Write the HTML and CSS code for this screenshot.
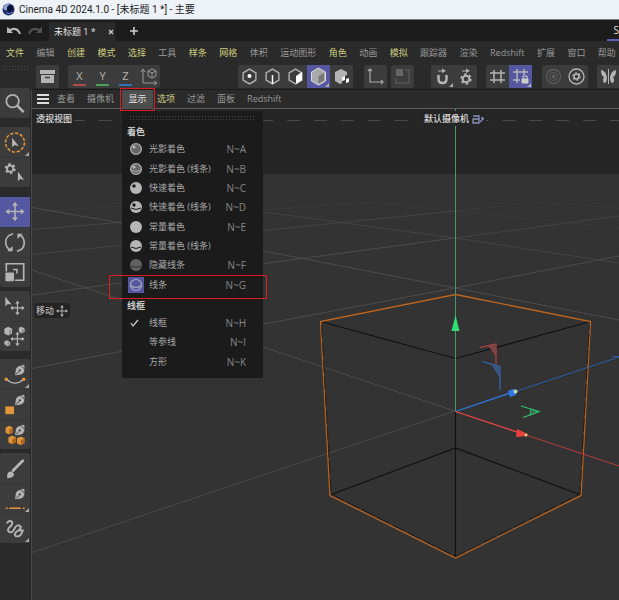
FILE: index.html
```html
<!DOCTYPE html>
<html lang="zh-CN">
<head>
    <meta charset="utf-8">
    <title>Cinema 4D 2024.1.0 - [未标题 1 *] - 主要</title>
    <link rel="stylesheet" href="styles.css">
</head>
<body>
    <!-- shared icons -->
    <svg class="defs" aria-hidden="true">
        <symbol id="move" viewBox="0 0 20 20">
            <path d="M10 2v16M2 10h16" stroke="currentColor" stroke-width="1.6"/>
            <path d="M10 0l3 4H7zM10 20l3-4H7zM0 10l4-3v6zM20 10l-4-3v6z" fill="currentColor"/>
        </symbol>
        <symbol id="pen" viewBox="0 0 10 11">
            <path d="M0 11L1 4Q3 1 6 1L10 5Q9 9 6 10Z" fill="currentColor"/>
            <path d="M6 0h3l1 1v3z" fill="currentColor"/>
            <path d="M1 10l4-4" stroke="#3c3c3c"/>
            <circle cx="5" cy="5.600" r="1.100" fill="#3c3c3c"/>
        </symbol>
        <symbol id="gear" viewBox="-6 -6 12 12">
            <circle r="3.300" fill="none" stroke="currentColor" stroke-width="2"/>
            <circle r="4.800" fill="none" stroke="currentColor" stroke-width="1.800" stroke-dasharray="2.500 2.520"/>
        </symbol>
        <symbol id="hex" viewBox="0 0 16 16">
            <path d="M8 1l6 3.500v7L8 15l-6-3.500v-7z" fill="none" stroke="currentColor" stroke-width="1.300"/>
        </symbol>
        <symbol id="cube" viewBox="0 0 8 9">
            <path d="M4 0l4 2v5L4 9 0 7V2z" fill="#e0953c"/>
            <path d="M4 4l4-2v5L4 9z" fill="#a8681f"/>
        </symbol>
    </svg>

    <header class="title-bar">
        <svg class="logo" width="13" height="13" viewBox="0 0 13 13">
            <circle cx="6.500" cy="6.500" r="6" fill="#1c2a66"/>
            <path d="M1 5Q3 0 8 1 5 3 5 7 2 8 1 5z" fill="#8fa4d8"/>
            <circle cx="8" cy="5.500" r="3" fill="#0b1030"/>
            <path d="M4 10q4 2 7-1" stroke="#6d86c8" fill="none"/>
        </svg>
        <span>Cinema 4D 2024.1.0 - [未标题 1 *] - 主要</span>
    </header>

    <div class="tab-bar">
        <button class="history" aria-label="撤销"><svg width="14" height="9" viewBox="0 0 14 9"><path d="M0 1v6h6L4 5q5-3 8 3h2Q11-1 3 3z" fill="#b8b8b8"/></svg></button>
        <button class="history" aria-label="重做"><svg width="14" height="9" viewBox="0 0 14 9"><path d="M14 1v6H8l2-2Q5 2 2 8H0q3-9 11-5z" fill="#505050"/></svg></button>
        <div class="tab">
            <span>未标题 1 *</span>
            <button aria-label="关闭"><svg width="6" height="6" viewBox="0 0 6 6"><path d="M1 1l4 4M5 1L1 5" stroke="#ccc" stroke-width="1.300"/></svg></button>
        </div>
        <button class="add" aria-label="新建"><svg width="8" height="8" viewBox="0 0 8 8"><path d="M4 0v8M0 4h8" stroke="#ccc" stroke-width="1.600"/></svg></button>
        <button class="layout">S</button>
    </div>

    <nav class="menu-bar">
        <button class="hot">文件</button>
        <button>编辑</button>
        <button class="hot">创建</button>
        <button class="hot">模式</button>
        <button class="hot">选择</button>
        <button>工具</button>
        <button class="hot">样条</button>
        <button class="hot">网格</button>
        <button>体积</button>
        <button>运动图形</button>
        <button class="hot">角色</button>
        <button>动画</button>
        <button class="hot">模拟</button>
        <button>跟踪器</button>
        <button>渲染</button>
        <button>Redshift</button>
        <button>扩展</button>
        <button>窗口</button>
        <button>帮助</button>
    </nav>

    <div class="workspace">
        <aside class="side-bar">
            <div class="grip"></div>
            <div class="tools">
                <button aria-label="搜索"><svg viewBox="0 0 30 30"><circle cx="12.500" cy="12.500" r="6.500" fill="none" stroke="currentColor" stroke-width="1.800"/><path d="M17 17l7 7" stroke="currentColor" stroke-width="2.500"/></svg></button>
            </div>
            <div class="tools select-tools">
                <button class="more" aria-label="选择"><svg viewBox="0 0 30 30"><circle cx="15" cy="15" r="9.800" fill="none" stroke="#e0953c" stroke-width="1.600" stroke-dasharray="3.400 1.700"/><path d="M12 10v10l2.500-2.500 4.500 1.500z" fill="currentColor"/></svg></button>
                <button aria-label="选择设置"><svg viewBox="0 0 30 30"><use href="#gear" x="4" y="5" width="12" height="12"/><path d="M18 14v10l2.500-2.500 4 1.500z" fill="currentColor"/></svg></button>
            </div>
            <div class="tools transform-tools">
                <button class="active" aria-label="移动"><svg viewBox="0 0 30 30"><use href="#move" x="5" y="4" width="20" height="20"/></svg></button>
                <button aria-label="旋转"><svg viewBox="0 0 30 30"><path d="M13 6Q5 8 5.500 15q0 5 4.500 8M17 24q8-2 7.500-9 0-5-4.500-8" fill="none" stroke="currentColor" stroke-width="1.700"/><path d="M7 24h5.500v-5.500zM23 6h-5.500v5.500z" fill="currentColor"/></svg></button>
                <button aria-label="缩放"><svg viewBox="0 0 30 30"><path d="M6 14V6h18v17H15" fill="none" stroke="currentColor" stroke-width="1.700"/><rect x="5" y="15" width="9" height="9" rx="1" fill="currentColor"/><path d="M13 12h4v4" fill="none" stroke="currentColor" stroke-width="1.600"/></svg></button>
            </div>
            <div class="tools place-tools">
                <button aria-label="放置"><svg viewBox="0 0 30 30"><path d="M5 5v10l2.500-2.500 4 .5z" fill="currentColor"/><use href="#move" x="10" y="9" width="15" height="15"/></svg></button>
                <button aria-label="散布"><svg viewBox="0 0 30 30"><path d="M4 7l4-2 4 2v5l-4 2-4-2z" fill="currentColor"/><path d="M19 6l3-1 3 2v3l-3 2-3-2z" fill="currentColor"/><path d="M4 20l3-1 3 2v3l-3 1-3-2z" fill="currentColor"/><path d="M10 8v5M23 8v3M8 21v3" stroke="#666"/><use href="#move" x="10" y="10" width="15" height="15"/></svg></button>
            </div>
            <div class="tools draw-tools">
                <button class="more" aria-label="样条画笔"><svg viewBox="0 0 30 30"><use href="#pen" x="15" y="5" width="10" height="11"/><path d="M6 20q9 8 18 0" fill="none" stroke="currentColor" stroke-width="1.300"/><circle cx="6" cy="20" r="1.800" fill="#e0953c"/><circle cx="24" cy="20" r="1.800" fill="#e0953c"/></svg></button>
                <button aria-label="多边形画笔"><svg viewBox="0 0 30 30"><use href="#pen" x="15" y="5" width="10" height="11"/><rect x="5" y="17" width="9" height="8" fill="#e0953c"/></svg></button>
                <button aria-label="体积画笔"><svg viewBox="0 0 30 30"><use href="#cube" x="5" y="6" width="8" height="9"/><use href="#cube" x="8" y="16" width="8" height="9"/><use href="#cube" x="17" y="17" width="8" height="9"/><use href="#pen" x="15" y="5" width="10" height="11"/></svg></button>
            </div>
            <div class="tools paint-tools">
                <button aria-label="笔刷"><svg viewBox="0 0 30 30"><path d="M13 17L23 7" stroke="currentColor" stroke-width="3" stroke-linecap="round"/><path d="M7 25q-1-6 3-7 4 0 4 4-2 3-7 3z" fill="currentColor"/></svg></button>
                <button class="more" aria-label="线条画笔"><svg viewBox="0 0 30 30"><use href="#pen" x="15" y="5" width="10" height="11"/><path d="M9 25h12M5.500 25h2M23 25h2" stroke="#e0953c" stroke-width="1.500"/></svg></button>
                <button class="more" aria-label="草绘"><svg viewBox="0 0 30 30"><path d="M7 9q2-3 5-1 1 3-3 6-3 4 1 5 3 0 5-5 3-4 6-1 0 3-4 5-4 3-1 5 5 1 7-6h-3" fill="none" stroke="currentColor" stroke-width="2" stroke-linecap="round"/></svg></button>
            </div>
        </aside>

        <main class="main">
            <div class="tool-bar">
                <div class="grip grip-tall"></div>
                <div class="group">
                    <button aria-label="资产"><svg viewBox="0 0 23 23"><path d="M4 5h15v4H4zM5 10h13v8H5z" fill="currentColor"/><path d="M9 12.500h5" stroke="#3c3c3c" stroke-width="1.500"/></svg></button>
                </div>
                <div class="group">
                    <button class="axis axis-x">X</button>
                    <button class="axis axis-y">Y</button>
                    <button class="axis axis-z">Z</button>
                    <button aria-label="坐标系统"><svg viewBox="0 0 23 23"><path d="M6 5v13h13M4 7l2-3 2 3M17 16l3 2-3 2" fill="none" stroke="#999"/><path d="M15 4l4 2v5l-4 2-4-2V6zM11 6l4 2 4-2M15 8v5" fill="none" stroke="#999"/></svg></button>
                </div>
                <div class="group modes">
                    <button aria-label="点"><svg viewBox="0 0 23 23"><use href="#hex" x="3" y="3" width="17" height="17"/><circle cx="11.500" cy="11" r="2" fill="#fff"/></svg></button>
                    <button aria-label="边"><svg viewBox="0 0 23 23"><use href="#hex" x="3" y="3" width="17" height="17"/><path d="M11.500 10v9" stroke="#fff" stroke-width="1.500"/></svg></button>
                    <button aria-label="多边形"><svg viewBox="0 0 23 23"><use href="#hex" x="3" y="3" width="17" height="17"/><path d="M12 11l6-4v8l-6 4z" fill="#fff"/></svg></button>
                    <button class="active more" aria-label="模型"><svg viewBox="0 0 23 23"><path d="M11.500 3l7 4v9l-7 4-7-4V7z" fill="#aaa" stroke="#ddd"/><path d="M11.500 11L17 8v7.500l-5.500 3z" fill="#777"/></svg></button>
                    <button aria-label="纹理"><svg viewBox="0 0 23 23"><path d="M5 7l6-3 6 3v3l-5 2v6l-2 1-5-3z" fill="currentColor"/><path d="M12 12l3-1v4l-3 1zM16 14l3-1v4l-3 1z" fill="#fff"/></svg></button>
                </div>
                <div class="group coords">
                    <button aria-label="启用轴心"><svg viewBox="0 0 23 23"><path d="M6 4v13h13M4 6l2-2 2 2M17 15l2 2-2 2" fill="none" stroke="#aaa" stroke-width="1.200"/></svg></button>
                </div>
                <div class="group plane">
                    <button aria-label="工作平面" disabled><svg viewBox="0 0 23 23"><path d="M5 4h7v7H5z" fill="#666"/><path d="M14 5h4v13H5v-5" fill="none" stroke="#555" stroke-width="1.500"/></svg></button>
                </div>
                <div class="group snap">
                    <button class="more" aria-label="捕捉"><svg viewBox="0 0 23 23"><path d="M7.500 10v4q0 4 4 4t4-4v-4" fill="none" stroke="currentColor" stroke-width="2.500"/><path d="M7 5.500h4v-2l4 2.500-4 2V6.500H7z" fill="currentColor"/></svg></button>
                    <button aria-label="捕捉设置"><svg viewBox="0 0 23 23"><use href="#gear" x="6" y="8" width="12" height="12"/><path d="M8 5.500h4v-2l4 2.500-4 2V6.500H8z" fill="currentColor"/></svg></button>
                </div>
                <div class="group">
                    <button aria-label="网格"><svg viewBox="0 0 23 23"><path d="M8 5v13M15 5v13M4 8h15M4 15h15" stroke="currentColor" stroke-width="1.500"/></svg></button>
                    <button class="active more" aria-label="锁定网格"><svg viewBox="0 0 23 23"><path d="M8 4v14M15 4v6M4 7h15M4 15h7" stroke="currentColor" stroke-width="1.500"/><path d="M13 14h6v4h-6z" fill="#ccc" stroke="#ccc"/><path d="M14 14v-3h4v3" fill="none" stroke="#ccc"/></svg></button>
                </div>
                <div class="group solo">
                    <button aria-label="独显"><svg viewBox="0 0 23 23"><circle cx="11.500" cy="11.500" r="7" fill="none" stroke="#5c5c5c" stroke-width="1.300"/><circle cx="11.500" cy="11.500" r="4" fill="none" stroke="#5c5c5c"/><circle cx="11.500" cy="11.500" r="2" fill="#5c5c5c"/></svg></button>
                    <button aria-label="独显设置"><svg viewBox="0 0 23 23"><circle cx="11.500" cy="11.500" r="7.500" fill="none" stroke="currentColor" stroke-width="1.300"/><use href="#gear" x="7" y="7" width="9" height="9"/></svg></button>
                </div>
                <div class="group">
                    <button aria-label="对称"><svg viewBox="0 0 23 23"><path d="M11.500 4v15" stroke="currentColor"/><path d="M10 12Q9 6 4 5q0 6 3 7-2 3 0 6 3 0 3-6zM13 12q1-6 6-7 0 6-3 7 2 3 0 6-3 0-3-6z" fill="currentColor"/></svg></button>
                </div>
            </div>

            <section class="view">
                <nav class="view-menu">
                    <button class="burger" aria-label="菜单"><span></span></button>
                    <button>查看</button>
                    <button>摄像机</button>
                    <div class="dropdown">
                        <button class="open" aria-expanded="true">显示</button>
                        <div class="panel">
                            <div class="grip"></div>
                            <h2>着色</h2>
                            <ul class="shading">
                                <li><button><svg viewBox="0 0 16 16"><circle cx="8" cy="8" r="5.400" fill="#666" stroke="#aaa" stroke-width="1.300"/><circle cx="6" cy="6" r="1.500" fill="#bbb"/></svg><span>光影着色</span><kbd>N~A</kbd></button></li>
                                <li><button><svg viewBox="0 0 16 16"><circle cx="8" cy="8" r="5.400" fill="#666" stroke="#aaa" stroke-width="1.300"/><circle cx="6" cy="6" r="1.500" fill="#bbb"/><path d="M3 9q5 3 10 0" fill="none" stroke="#aaa"/></svg><span>光影着色 (线条)</span><kbd>N~B</kbd></button></li>
                                <li><button><svg viewBox="0 0 16 16"><circle cx="8" cy="8" r="6" fill="#b5b5b5"/><circle cx="6" cy="6" r="1.700" fill="#1b1b1b"/></svg><span>快速着色</span><kbd>N~C</kbd></button></li>
                                <li><button><svg viewBox="0 0 16 16"><circle cx="8" cy="8" r="6" fill="#b5b5b5"/><circle cx="6" cy="6" r="1.700" fill="#1b1b1b"/><path d="M3 9q5 3 10 0" fill="none" stroke="#1b1b1b"/></svg><span>快速着色 (线条)</span><kbd>N~D</kbd></button></li>
                                <li><button><svg viewBox="0 0 16 16"><circle cx="8" cy="8" r="6" fill="#b5b5b5"/></svg><span>常量着色</span><kbd>N~E</kbd></button></li>
                                <li><button><svg viewBox="0 0 16 16"><circle cx="8" cy="8" r="6" fill="#b5b5b5"/><path d="M3 9q5 3 10 0" fill="none" stroke="#1b1b1b"/></svg><span>常量着色 (线条)</span></button></li>
                                <li><button><svg viewBox="0 0 16 16"><circle cx="8" cy="8" r="6" fill="#626262"/><path d="M3 9q5 3 10 0" fill="none" stroke="#2b2b2b"/></svg><span>隐藏线条</span><kbd>N~F</kbd></button></li>
                                <li class="marked"><button><svg class="current" viewBox="0 0 16 16"><circle cx="8" cy="8" r="5.500" fill="none" stroke="#aaaac0" stroke-width="1.200"/><path d="M3 9q5 3 10 0" fill="none" stroke="#aaaac0" stroke-width="1.200"/></svg><span>线条</span><kbd>N~G</kbd></button></li>
                            </ul>
                            <h2 class="next">线框</h2>
                            <ul class="wire">
                                <li><button><svg viewBox="0 0 16 16"><path d="M3 8l2 3 5-6" fill="none" stroke="#ccc" stroke-width="1.300"/></svg><span>线框</span><kbd>N~H</kbd></button></li>
                                <li><button><i></i><span>等参线</span><kbd>N~I</kbd></button></li>
                                <li><button><i></i><span>方形</span><kbd>N~K</kbd></button></li>
                            </ul>
                        </div>
                    </div>
                    <button class="hot">选项</button>
                    <button>过滤</button>
                    <button>面板</button>
                    <button>Redshift</button>
                </nav>

                <div class="canvas">
                    <svg class="scene" viewBox="32 109 587 491" preserveAspectRatio="xMinYMin slice">
                        <rect x="32" y="109" width="587" height="65" fill="#262626"/>
                        <path d="M45 120.500H619" stroke="#484848" stroke-dasharray="13 13.900"/>
                        <!-- floor grid, the far lines are fainter -->
                        <g stroke="#3a3a3a" fill="none">
                            <path d="M32 212l89-6M264 210l106-8M264 212L121 192M370 202l85 9 164 17M455 211l85-9 79 6"/>
                        </g>
                        <g stroke="#444" fill="none">
                            <path d="M32 229.500L264 211M32 254.500L264 230.500 455 211M264 212L455 238 619 263M455 238L619 216"/>
                        </g>
                        <g stroke="#4c4c4c" fill="none">
                            <path d="M32 207.500L121 223 264 251 455 288 619 320M32 295L264 263.500 455 238M32 368.500L264 324 455 288 619 256"/>
                            <path d="M32 270L455 411M32 552.500L455 411"/>
                        </g>
                        <!-- cube -->
                        <g fill="none">
                            <path d="M320.500 321.500L455.500 358.500 590.500 321.500M330 495L455.500 448 581 495M455.500 411V557" stroke="#111" stroke-width="1.200"/>
                            <path d="M455.500 294.500L590.500 321.500 581 495.500 455.500 558 330 495.500 320.500 321.500z" stroke="#bd6520" stroke-width="1.300"/>
                            <path d="M321.500 325L331 494 455.500 556.500 580 494 589.500 325" stroke="#16120e" stroke-width=".7" stroke-dasharray="14 3"/>
                        </g>
                        <!-- axes -->
                        <path d="M455.500 109V411" stroke="#43996a"/>
                        <path d="M455.500 411.500L619 357M612 356.500h7" stroke="#2e5ca6" fill="none"/>
                        <path d="M455.500 411.500L513 392" stroke="#3270cc" stroke-width="1.300"/>
                        <path d="M455.500 411.500L619 466" stroke="#b53d3d"/>
                        <path d="M455.500 411.500L520 433" stroke="#e04646" stroke-width="1.300"/>
                        <path d="M455.500 315l4 16h-8z" fill="#2fdd74"/>
                        <path d="M508 391l5-2 4 1-1 5-6 2z" fill="#2f78e8"/>
                        <circle cx="515.500" cy="391.500" r="2" fill="#c9cfa8"/>
                        <path d="M517 429l11 5-2 2-10 1z" fill="#e84040"/>
                        <circle cx="526" cy="435" r="1.500" fill="#f0d070"/>
                        <path d="M480 347.500l16-3.500v20M489 346l7 9" fill="none" stroke="#b84444" stroke-width="1.200"/>
                        <path d="M489 346l7-2v10z" fill="#7b4444"/>
                        <path d="M482 361.500l18 5v24M492 364l8 13" fill="none" stroke="#3467b8" stroke-width="1.200"/>
                        <path d="M492 365l8 1v11z" fill="#3a557f"/>
                        <path d="M521 406l18 5.500-16 6" fill="none" stroke="#2fc06a" stroke-width="1.200"/>
                        <path d="M531 409l7 3-8 3z" fill="#38694c" stroke="#2fc06a"/>
                    </svg>
                    <span class="label view-name">透视视图</span>
                    <span class="label camera">默认摄像机<svg width="13" height="10" viewBox="0 0 13 10"><path d="M2 2h6v3H2v4h6V5M9 8l3-3M10 4h2v2" fill="none" stroke="#8793b8" stroke-width="1.300"/></svg></span>
                    <span class="label tool-name">移动<svg width="12" height="12"><use href="#move" width="12" height="12"/></svg></span>
                </div>
            </section>
        </main>
    </div>
</body>
</html>
```
FILE: styles.css
```css
* {
    box-sizing: border-box;
}
body {
    margin: 0;
    min-height: 100vh;
    display: flex;
    flex-direction: column;
    overflow: hidden;
    background: #2a2a2a;
    color: #999;
    font-family: "Open Sans", "Noto Sans CJK SC", sans-serif;
    font-size: 9px;
    line-height: 16px;
}
button {
    margin: 0;
    padding: 0;
    border: 0;
    background: none;
    color: inherit;
    font: inherit;
    white-space: nowrap;
}
svg {
    display: block;
    flex: none;
}
.defs {
    position: absolute;
    width: 0;
    height: 0;
}
.hot {
    color: #cdcd80;
}

/* window title and document tabs */
.title-bar {
    display: flex;
    align-items: center;
    gap: 4px;
    height: 20px;
    padding-left: 2px;
    border-bottom: 1px solid #777c80;
    background: #eef3f9;
    color: #222;
    font-family: Roboto, "Noto Sans CJK SC", sans-serif;
    font-size: 10px;
}
.tab-bar {
    display: flex;
    align-items: center;
    height: 21px;
    padding-left: 7px;
    background: #1c1c1c;
}
.history {
    margin-right: 7px;
}
.tab {
    display: flex;
    align-items: center;
    justify-content: space-between;
    width: 66px;
    height: 19px;
    padding: 0 1px 0 5px;
    margin-top: 2px;
    background: #2a2a2a;
    color: #e4e4e4;
}
.add {
    margin-left: 15px;
}
.layout {
    width: 12px;
    height: 21px;
    margin-left: auto;
    border-bottom: 2px solid #5c62b0;
    color: #ddd;
    font-size: 10px;
    text-align: right;
}

.menu-bar {
    display: flex;
    justify-content: space-between;
    align-items: center;
    height: 23px;
    padding: 0 3px 0 6px;
}

.workspace {
    flex: 1;
    display: grid;
    grid-template-columns: 31px 1fr;
}
.grip {
    height: 5px;
    background: radial-gradient(circle, #464646 1px, transparent 1px) 0 0 / 3px 3px;
}

/* left tools */
.side-bar .grip {
    margin: 1px 3px 18px 2px;
}
.tools {
    width: 30px;
    border-radius: 2px;
    background: #3c3c3c;
    color: #b4b4b4;
}
.tools button {
    position: relative;
    display: block;
    width: 30px;
    height: 30px;
}
.tools button + button {
    border-top: 1px solid #363636;
}
.tools svg {
    width: 30px;
    height: 29px;
}
.tools .active,
.group .active {
    background: #5558a0;
}
.select-tools {
    margin-top: 9px;
}
.transform-tools {
    margin-top: 10px;
}
.place-tools,
.paint-tools {
    margin-top: 4px;
}
.draw-tools {
    margin-top: 8px;
}
.more::after {
    content: "";
    position: absolute;
    right: 1px;
    bottom: 1px;
    border: 2px solid;
    border-color: transparent #aaa #aaa transparent;
}

/* top tools */
.main {
    display: flex;
    flex-direction: column;
    min-width: 0;
}
.tool-bar {
    display: flex;
    align-items: center;
    gap: 9px;
    height: 25px;
    overflow: hidden;
}
.grip-tall {
    width: 5px;
    height: 18px;
    margin-right: -7px;
}
.grip-tall + .group {
    margin-left: 3px;
}
.group {
    display: flex;
    flex: none;
    border-radius: 2px;
    background: #3c3c3c;
    color: #b4b4b4;
}
.group button {
    position: relative;
    width: 23px;
    height: 23px;
}
.group svg {
    width: 23px;
    height: 23px;
}
.group .axis {
    font-size: 11px;
    line-height: 16px;
}
.axis::after {
    content: "";
    display: block;
    width: 13px;
    height: 2px;
    margin: 0 auto;
    background: #b04a4a;
}
.axis-y::after {
    background: #4aa05a;
}
.axis-z::after {
    background: #3472b4;
}
.modes {
    margin-left: 69px;
}
.coords {
    margin-left: 2px;
}
.plane {
    margin-left: -5px;
}
.snap {
    margin-left: 8px;
}
.solo {
    margin-left: 1px;
}

/* viewport */
.view {
    flex: 1;
    display: flex;
    flex-direction: column;
    border-top: 1px solid #1c1c1c;
    border-left: 1px solid #484848;
}
.view-menu {
    display: flex;
    align-items: center;
    gap: 12px;
    height: 19px;
    padding-left: 5px;
    border-bottom: 1px solid #5c5c5c;
}
.burger {
    width: 12px;
    height: 10px;
    margin-right: -4px;
    border: solid #ddd;
    border-width: 2px 0;
}
.burger span {
    display: block;
    height: 2px;
    background: #ddd;
}
.dropdown {
    position: relative;
    margin: 0 -8px 0 -4px;
    z-index: 1;
}
.open {
    display: block;
    width: 31px;
    height: 19px;
    background: #4e4e4e;
    color: #e4e4e4;
    outline: 1px solid #dc1c22;
    outline-offset: 1px;
}
.panel {
    position: absolute;
    top: 21px;
    left: 0;
    width: 141px;
    padding: 4px 0 6px;
    background: #1b1b1b;
    color: #a8a8a8;
}
.panel .grip {
    margin: 0 8px 4px 7px;
}
.panel h2 {
    margin: 0;
    padding-left: 5px;
    color: #ccc;
    font-size: 9px;
    line-height: 16px;
}
.panel .next {
    margin-top: 3px;
}
.panel ul {
    display: grid;
    grid-auto-rows: 1fr;
    margin: 0;
    padding: 0;
    list-style: none;
}
.panel .shading {
    height: 155px;
}
.panel .wire {
    height: 58px;
}
.panel li {
    display: grid;
}
.panel li button {
    display: grid;
    grid-template-columns: 16px 1fr auto;
    align-items: center;
    column-gap: 5px;
    padding: 0 17px 0 6px;
    text-align: left;
}
.panel li svg {
    width: 16px;
    height: 16px;
}
.panel kbd {
    color: #868686;
    font: inherit;
    font-size: 10px;
}
.current {
    background: #5558a0;
}
.marked {
    position: relative;
}
.marked::after {
    content: "";
    position: absolute;
    inset: 0 -4px -4px -13px;
    border: 1px solid #dc1c22;
}

.canvas {
    position: relative;
    flex: 1;
    background: #333;
}
.scene {
    position: absolute;
    width: 100%;
    height: 100%;
}
.label {
    position: absolute;
    display: flex;
    align-items: center;
    gap: 2px;
    padding: 0 2px;
    border-radius: 2px;
    background: #242424;
    color: #dedede;
    font-weight: 500;
    line-height: 15px;
}
.view-name {
    top: 2px;
    left: 2px;
}
.camera {
    top: 2px;
    left: 390px;
}
.tool-name {
    top: 194px;
    left: 2px;
    color: #b4b4b4;
}
```
